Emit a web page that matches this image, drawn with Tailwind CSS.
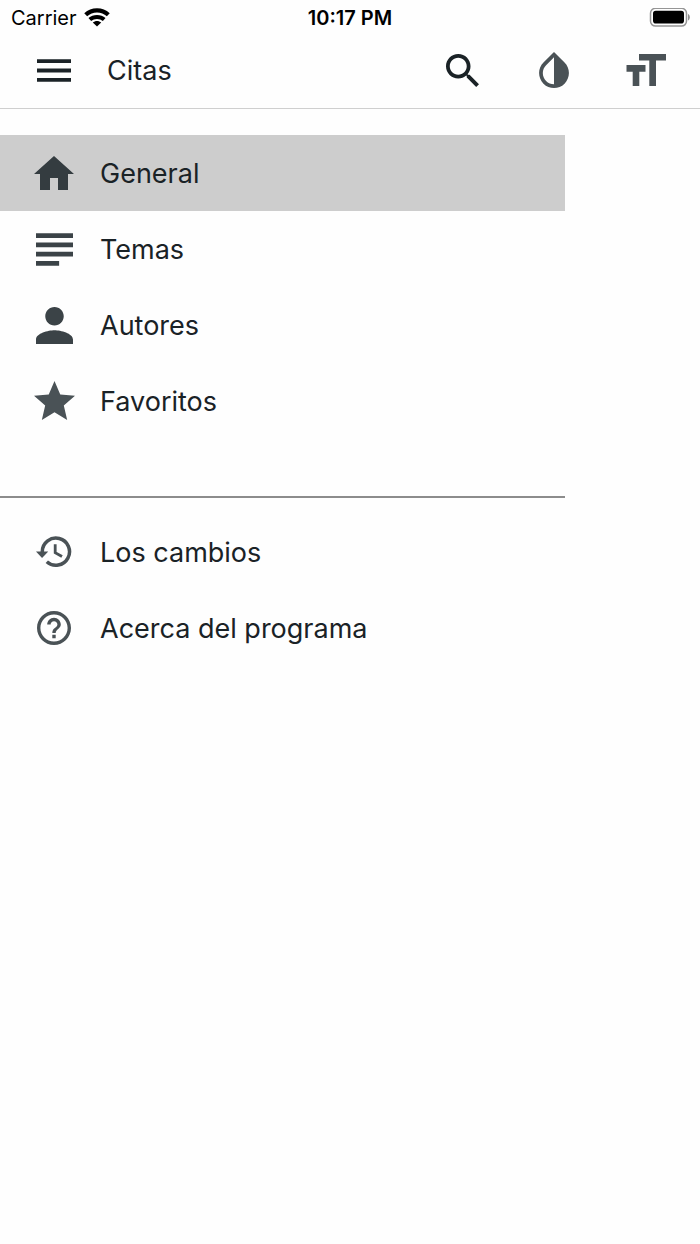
<!DOCTYPE html>
<html lang="es">
<head>
    <meta charset="UTF-8">
    <meta name="viewport" content="width=device-width, initial-scale=1.0">
    <title>Citas</title>
    <script src="https://cdn.jsdelivr.net/npm/@tailwindcss/browser@4"></script>
</head>
<body class="bg-[#fefefe] min-h-screen font-['Inter',sans-serif] text-[#1a2226]">
    <!-- Status bar -->
    <div class="grid grid-cols-3 items-center h-9 px-[10px] text-xl text-black">
        <div class="flex items-center gap-[7px] pl-px">
            <span>Carrier</span>
            <svg class="w-[26px] h-5" viewBox="0 0 26 20" fill="none" stroke="currentColor" stroke-width="4.200">
                <path d="M1.700 6.800C8 0.800 18 0.800 24.300 6.800"/>
                <path d="M5.800 11.600C9.800 8 16.200 8 20.200 11.600" stroke-width="4"/>
                <path d="M13 18.600l-4.200-4c2.200-2.200 6.200-2.200 8.400 0z" fill="currentColor" stroke="none"/>
            </svg>
        </div>
        <span class="text-center font-semibold">10:17 PM</span>
        <svg class="justify-self-end w-[42px] h-5" viewBox="0 0 42 20">
            <rect x="2.500" y="0.300" width="36" height="17.800" rx="5" fill="none" stroke="#959595" stroke-width="1.500"/>
            <rect x="5" y="2.800" width="31" height="12.800" rx="2.800" fill="#000"/>
            <path d="M40 6c2.400 1 2.400 5.400 0 6.400z" fill="#8f8f8f"/>
        </svg>
    </div>

    <!-- Toolbar -->
    <header class="flex items-center h-[73px] pr-2 pb-1 border-b border-[#cfcfcf]">
        <button type="button" aria-label="Menú" class="flex justify-center items-center w-[107px] h-full">
            <svg class="w-[34px] h-[23px]" viewBox="3 6 18 12" fill="currentColor">
                <path d="M3 18h18v-2H3v2zm0-5h18v-2H3v2zm0-7v2h18V6H3z"/>
            </svg>
        </button>
        <h1 class="flex-1 pt-0.5 text-[27px]">Citas</h1>
        <button type="button" aria-label="Buscar" class="flex justify-center items-center w-[92px] h-full">
            <svg class="size-[33px]" viewBox="3 3 17.5 17.5" fill="currentColor">
                <path d="M15.5 14h-.79l-.28-.27C15.41 12.59 16 11.11 16 9.5 16 5.91 13.09 3 9.5 3S3 5.91 3 9.5 5.91 16 9.5 16c1.61 0 3.09-.59 4.23-1.57l.27.28v.79l5 4.99L20.49 19l-4.99-5zm-6 0C7.01 14 5 11.99 5 9.5S7.01 5 9.5 5 14 7.01 14 9.5 11.99 14 9.5 14z"/>
            </svg>
        </button>
        <button type="button" aria-label="Invertir colores" class="flex justify-center items-center w-[92px] h-full text-[#4a5256]">
            <svg class="w-[30px] h-9" viewBox="4 2.27 16 19.31" fill="currentColor">
                <path d="M17.66 7.93L12 2.27 6.34 7.93c-3.12 3.12-3.12 8.19 0 11.31C7.9 20.8 9.95 21.58 12 21.58c2.05 0 4.1-.78 5.66-2.34 3.12-3.12 3.12-8.19 0-11.31zM12 19.59c-1.6 0-3.11-.62-4.24-1.76C6.62 16.69 6 15.19 6 13.59s.62-3.11 1.76-4.24L12 5.1v14.49z"/>
            </svg>
        </button>
        <button type="button" aria-label="Tamaño de letra" class="flex justify-center items-center w-[92px] h-full text-[#4a5256]">
            <svg class="w-10 h-8" viewBox="0 0 40 32" fill="currentColor">
                <path d="M13 0h27v6.500H30V32h-6.700V6.500H13zM.5 11h19v6.700h-6.200V32H6.700V17.700H.5z"/>
            </svg>
        </button>
    </header>

    <!-- Drawer -->
    <nav class="w-full max-w-[565px] pt-[26px] text-[27px]">
        <ul>
            <li>
                <a href="#general" aria-current="page" class="flex items-center gap-[22px] h-[76px] pl-[30px] bg-[#cdcdcd]">
                    <span class="flex justify-center w-12 text-[#343c40]">
                        <svg class="w-10 h-[34px]" viewBox="2 3 20 17" fill="currentColor"><path d="M10 20v-6h4v6h5v-8h3L12 3 2 12h3v8z"/></svg>
                    </span>
                    <span class="pt-0.5">General</span>
                </a>
            </li>
            <li>
                <a href="#temas" class="flex items-center gap-[22px] h-[76px] pl-[30px]">
                    <span class="flex justify-center w-12 text-[#3b4347]">
                        <svg class="w-[37px] h-[33px]" viewBox="4 5 16 14" fill="currentColor"><path d="M14 17H4v2h10v-2zm6-8H4v2h16V9zM4 15h16v-2H4v2zM4 5v2h16V5H4z"/></svg>
                    </span>
                    <span class="pt-0.5">Temas</span>
                </a>
            </li>
            <li>
                <a href="#autores" class="flex items-center gap-[22px] h-[76px] pl-[30px]">
                    <span class="flex justify-center w-12 text-[#3b4347]">
                        <svg class="size-[37px]" viewBox="4 4 16 16" fill="currentColor"><path d="M12 12c2.210 0 4-1.790 4-4s-1.790-4-4-4-4 1.790-4 4 1.790 4 4 4zm0 2c-2.670 0-8 1.340-8 4v2h16v-2c0-2.660-5.330-4-8-4z"/></svg>
                    </span>
                    <span class="pt-0.5">Autores</span>
                </a>
            </li>
            <li>
                <a href="#favoritos" class="flex items-center gap-[22px] h-[76px] pl-[30px]">
                    <span class="flex justify-center w-12 text-[#4a5256]">
                        <svg class="w-[41px] h-10" viewBox="2 2 20 19.5" fill="currentColor"><path d="M12 17.270L18.180 21l-1.640-7.030L22 9.240l-7.190-.61L12 2 9.190 8.630 2 9.240l5.460 4.730L5.820 21z"/></svg>
                    </span>
                    <span class="pt-0.5">Favoritos</span>
                </a>
            </li>
        </ul>
        <ul class="mt-[57px] pt-4 border-t-2 border-[#8c8c8c]">
            <li>
                <a href="#cambios" class="flex items-center gap-[22px] h-[76px] pl-[30px]">
                    <span class="flex justify-center w-12 text-[#4a5256]">
                        <svg class="w-9 h-8" viewBox="0 0 36 32" fill="none" stroke="currentColor" stroke-width="3.500">
                            <path d="M6.300 17V15.500A13.600 13.600 0 1 1 10.800 25.800"/>
                            <path d="M0 15.500h12.200L6.100 22z" fill="currentColor" stroke="none"/>
                            <path d="M19.200 8.300v8.300l6.800 3.900" stroke-width="2.800"/>
                        </svg>
                    </span>
                    <span class="pt-0.5">Los cambios</span>
                </a>
            </li>
            <li>
                <a href="#acerca" class="flex items-center gap-[22px] h-[76px] pl-[30px]">
                    <span class="flex justify-center w-12 text-[#4a5256]">
                        <svg class="size-[34px]" viewBox="2 2 20 20" fill="currentColor"><path d="M11 18h2v-2h-2v2zm1-16C6.480 2 2 6.480 2 12s4.480 10 10 10 10-4.480 10-10S17.520 2 12 2zm0 18c-4.410 0-8-3.590-8-8s3.590-8 8-8 8 3.590 8 8-3.590 8-8 8zm0-14c-2.210 0-4 1.790-4 4h2c0-1.100.9-2 2-2s2 .9 2 2c0 2-3 1.750-3 5h2c0-2.250 3-2.500 3-5 0-2.210-1.790-4-4-4z"/></svg>
                    </span>
                    <span class="pt-0.5">Acerca del programa</span>
                </a>
            </li>
        </ul>
    </nav>
</body>
</html>
